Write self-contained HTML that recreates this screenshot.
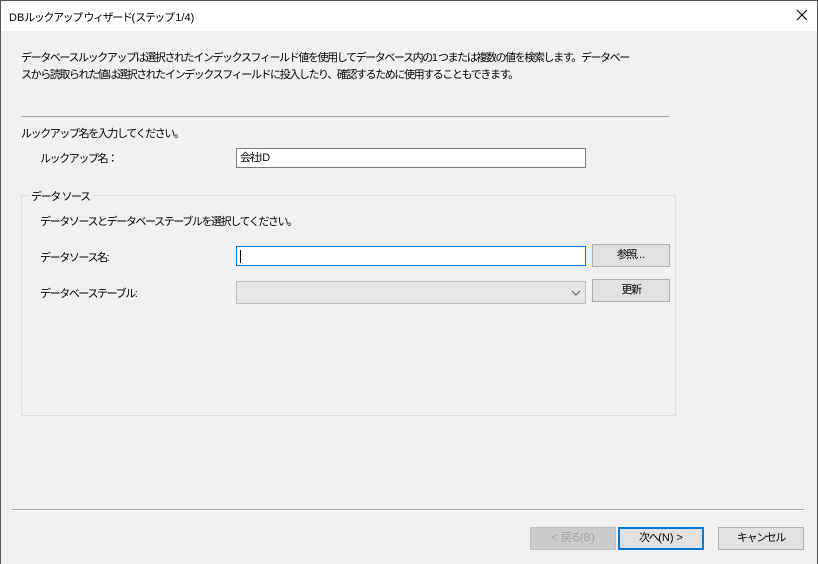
<!DOCTYPE html>
<html><head><meta charset="utf-8"><style>
*{margin:0;padding:0;box-sizing:border-box}
body{width:818px;height:564px;overflow:hidden;background:#f0f0f0;font-family:"Liberation Sans","Noto Sans CJK JP",sans-serif;font-size:11px;color:#000;position:relative;letter-spacing:-1.4px}
.a{position:absolute;white-space:nowrap}
.l{letter-spacing:0}
.win{position:absolute;left:0;top:0;width:818px;height:564px;border:1px solid #555;border-bottom:none}
.title{position:absolute;left:1px;top:1px;width:816px;height:30px;background:#fff}
.btn{position:absolute;background:#e1e1e1;border:1px solid #adadad;text-align:center;line-height:20px;height:23px}
.inp{position:absolute;background:#fff;border:1px solid #7a7a7a;height:20px}
</style></head><body>
<div class="win"></div>
<div class="title"></div>
<div class="a" style="left:9px;top:9px;font-size:11px"><span class="l">DB</span>ルックアップ ウィザード<span class="l">(</span>ステップ <span class="l">1/4)</span></div>
<svg class="a" style="left:796px;top:9px" width="12" height="12"><path d="M1 1L11 11M11 1L1 11" stroke="#000" stroke-width="1.1"/></svg>
<div class="a" style="left:21px;top:50px;line-height:17px">データベースルックアップは選択されたインデックスフィールド値を使用してデータベース内の<span class="l">1</span>つまたは複数の値を検索します。データベー<br>スから読取られた値は選択されたインデックスフィールドに投入したり、確認するために使用することもできます。</div>
<div class="a" style="left:21px;top:116px;width:648px;height:1px;background:#a0a0a0"></div>
<div class="a" style="left:21px;top:125px">ルックアップ名を入力してください。</div>
<div class="a" style="left:40px;top:150px">ルックアップ名：</div>
<div class="inp" style="left:236px;top:148px;width:350px;padding-left:3px;line-height:18px">会社<span class="l">ID</span></div>
<div class="a" style="left:21px;top:195px;width:655px;height:221px;border:1px solid #dcdcdc"></div>
<div class="a" style="left:28px;top:188px;background:#f0f0f0;padding:0 3px">データ ソース</div>
<div class="a" style="left:40px;top:213px">データソースとデータベーステーブルを選択してください。</div>
<div class="a" style="left:40px;top:249px">データソース名<span class="l">:</span></div>
<div class="inp" style="left:236px;top:246px;width:350px;border-color:#0078d7"><div style="position:absolute;left:3px;top:3px;width:1px;height:13px;background:#000"></div></div>
<div class="btn" style="left:592px;top:244px;width:78px">参照<span class="l">...</span></div>
<div class="a" style="left:40px;top:285px">データベーステーブル<span class="l">:</span></div>
<div class="a" style="left:236px;top:281px;width:350px;height:23px;background:#e6e6e6;border:1px solid #bcbcbc"></div>
<svg class="a" style="left:571px;top:290px" width="10" height="6"><path d="M1 1L5 5L9 1" fill="none" stroke="#555"/></svg>
<div class="btn" style="left:592px;top:279px;width:78px">更新</div>
<div class="a" style="left:12px;top:509px;width:792px;height:1px;background:#a0a0a0"></div>
<div class="a" style="left:12px;top:510px;width:792px;height:1px;background:#fff"></div>
<div class="btn" style="left:530px;top:527px;width:86px;color:#a0a0a0;background:#cccccc;border-color:#bfbfbf"><span class="l">&lt; </span>戻る<span class="l">(B)</span></div>
<div class="btn" style="left:618px;top:527px;width:86px;border:2px solid #0078d7;line-height:19px">次へ<span class="l">(N) &gt;</span></div>
<div class="btn" style="left:718px;top:527px;width:86px">キャンセル</div>
</body></html>
